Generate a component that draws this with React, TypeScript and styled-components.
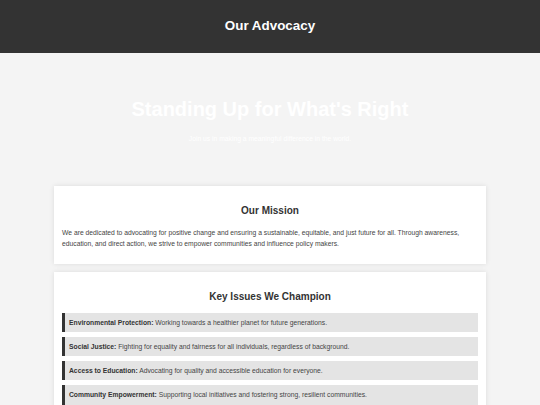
import styled, { createGlobalStyle } from "styled-components";

const GlobalStyle = createGlobalStyle`
  html, body {
    margin: 0;
    padding: 0;
  }
  body {
    background-color: #f4f4f4;
    font-family: "Liberation Sans", Arial, sans-serif;
    color: #444;
    line-height: 1.6;
  }
`;

const Header = styled.header`
  background-color: #333;
  height: 53px;
  display: flex;
  align-items: center;
  justify-content: center;
`;
const HeaderTitle = styled.h1`
  margin: 0;
  color: #fff;
  font-size: 13.4px;
  font-weight: bold;
  line-height: 1.2;
`;
const Hero = styled.section`
  text-align: center;
  padding: 45px 0 42px;
  color: #fff;
`;
const HeroTitle = styled.h2`
  margin: 0;
  font-size: 20px;
  line-height: 23px;
  font-weight: bold;
`;
const HeroText = styled.p`
  margin: 12px 0 0;
  font-size: 6.75px;
  line-height: 11.2px;
`;
const Container = styled.main`
  width: 80%;
  margin: 0 auto;
`;
const Card = styled.section`
  background-color: #fff;
  padding: 9px 8px 8px;
  margin-bottom: 8px;
  box-shadow: 0 0 5px rgba(0, 0, 0, 0.1);
`;
const CardTitle = styled.h3`
  margin: 10px 0 10px;
  text-align: center;
  color: #333;
  font-size: 10px;
  line-height: 11.5px;
  font-weight: bold;
`;
const Text = styled.p`
  margin: 0 0 7px;
  font-size: 6.75px;
  line-height: 11.3px;
`;
const IssueList = styled.ul`
  list-style: none;
  margin: 1.5px 0 0;
  padding: 0;
`;
const Issue = styled.li`
  background-color: #e4e4e4;
  border-left: 3px solid #333;
  padding: 4px 4px;
  margin-bottom: 5px;
  font-size: 6.75px;
  line-height: 11.2px;

  strong {
    color: #333;
  }
`;

const issues = [
  ["Environmental Protection:", "Working towards a healthier planet for future generations."],
  ["Social Justice:", "Fighting for equality and fairness for all individuals, regardless of background."],
  ["Access to Education:", "Advocating for quality and accessible education for everyone."],
  ["Community Empowerment:", "Supporting local initiatives and fostering strong, resilient communities."],
];

export default function App() {
  return (
    <>
      <GlobalStyle />
      <Header>
        <HeaderTitle>Our Advocacy</HeaderTitle>
      </Header>
      <Hero>
        <HeroTitle>Standing Up for What's Right</HeroTitle>
        <HeroText>Join us in making a meaningful difference in the world.</HeroText>
      </Hero>
      <Container>
        <Card>
          <CardTitle>Our Mission</CardTitle>
          <Text>
            We are dedicated to advocating for positive change and ensuring a sustainable, equitable, and just
            future for all. Through awareness, education, and direct action, we strive to empower communities and
            influence policy makers.
          </Text>
        </Card>
        <Card>
          <CardTitle>Key Issues We Champion</CardTitle>
          <IssueList>
            {issues.map(([label, text]) => (
              <Issue key={label}>
                <strong>{label}</strong> {text}
              </Issue>
            ))}
          </IssueList>
        </Card>
      </Container>
    </>
  );
}
